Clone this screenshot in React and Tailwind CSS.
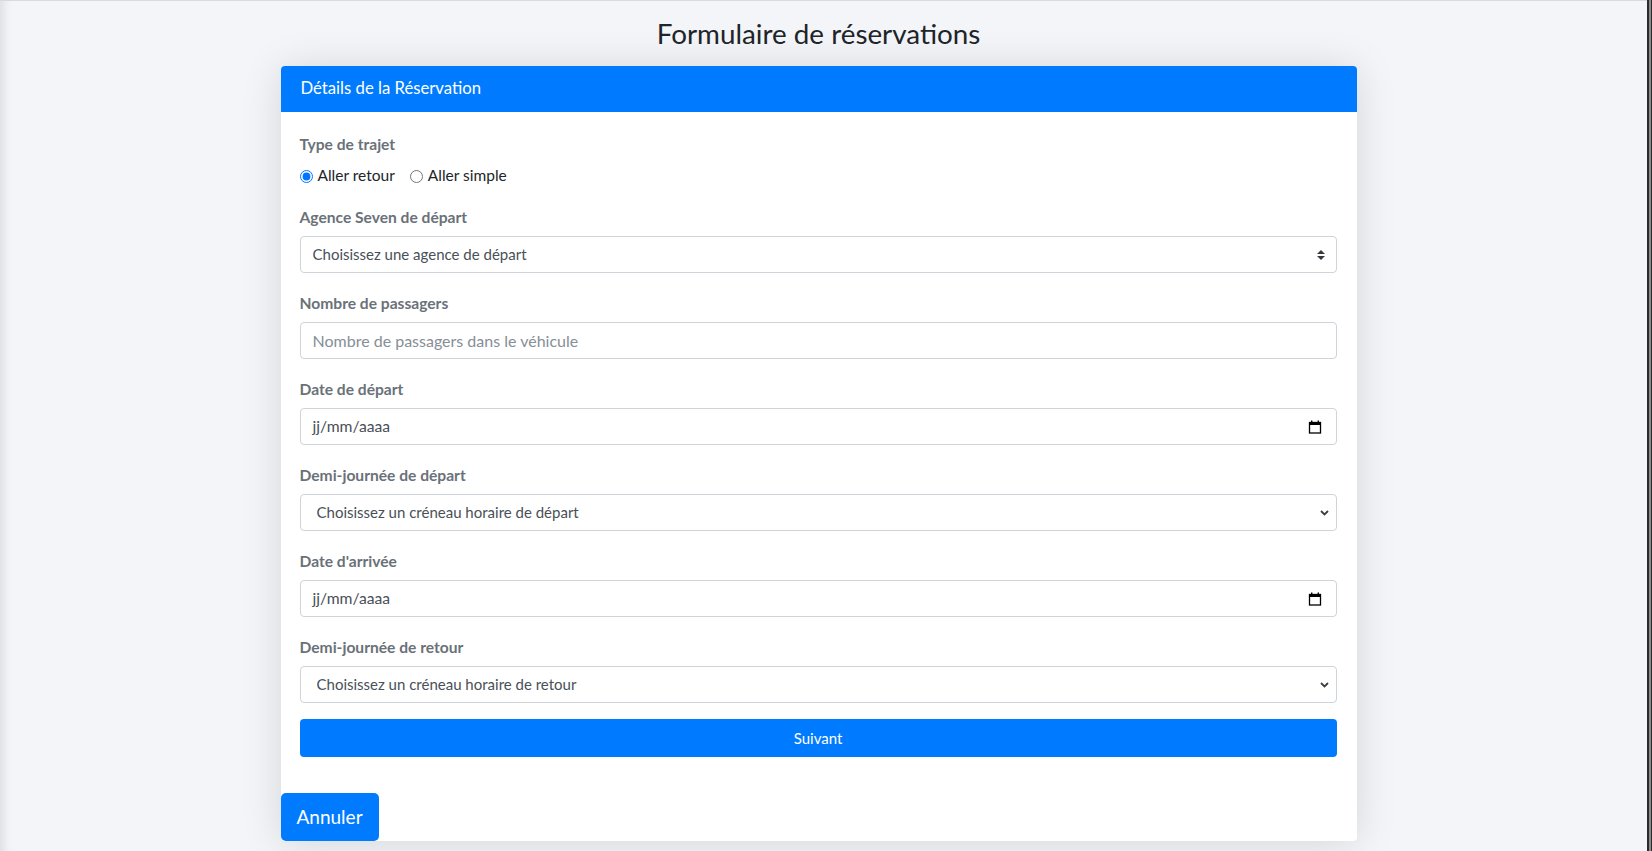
import React, { useState } from "react";

const FONT = { fontFamily: '"Lato", "Liberation Sans", sans-serif' };

function Field({ label, children }) {
  return (
    <div className="mb-[19px]">
      <label className="block h-[22px] leading-[22px] mb-[8px] text-[15.6px] font-bold text-[#6a7178]">
        {label}
      </label>
      {children}
    </div>
  );
}

function UpDownIcon() {
  return (
    <svg width="8" height="10" viewBox="0 0 4 5" className="absolute right-[12px] top-1/2 -translate-y-1/2 pointer-events-none">
      <path fill="#343a40" d="M2 0L0 2h4zm0 5L0 3h4z" />
    </svg>
  );
}

function ChevronIcon() {
  return (
    <svg width="9" height="6" viewBox="0 0 9 6" className="absolute right-[4px] top-1/2 -translate-y-1/2 pointer-events-none">
      <path d="M1 1l3.5 3.5L8 1" fill="none" stroke="#3c4043" strokeWidth="1.8" />
    </svg>
  );
}

function CalendarIcon() {
  return (
    <svg width="14" height="14" viewBox="0 0 14 14">
      <rect x="1.5" y="2.5" width="11" height="10.5" fill="none" stroke="#000" strokeWidth="1.3" />
      <rect x="1" y="2" width="12" height="3" fill="#000" />
      <rect x="3" y="0.5" width="1.4" height="2" fill="#000" />
      <rect x="9.6" y="0.5" width="1.4" height="2" fill="#000" />
    </svg>
  );
}

function CustomSelect({ placeholder }) {
  return (
    <div className="relative">
      <select className="w-full h-[37px] appearance-none rounded-[4px] border border-[#ced4da] bg-white pl-[12px] pr-[28px] text-[15px] text-[#495057] outline-none">
        <option>{placeholder}</option>
      </select>
      <UpDownIcon />
    </div>
  );
}

function NativeSelect({ placeholder }) {
  return (
    <div className="relative">
      <select className="w-full h-[37px] appearance-none rounded-[4px] border border-[#ced4da] bg-white pl-[16px] pr-[24px] text-[15px] text-[#495057] outline-none">
        <option>{placeholder}</option>
      </select>
      <div className="absolute right-[4px] top-0 h-full w-[12px]">
        <ChevronIcon />
      </div>
    </div>
  );
}

function DateInput() {
  return (
    <div className="h-[37px] rounded-[4px] border border-[#ced4da] bg-white pl-[12px] pr-[14px] flex items-center justify-between text-[15.7px] text-[#495057]">
      <span>jj/mm/aaaa</span>
      <CalendarIcon />
    </div>
  );
}

export default function App() {
  const [trip, setTrip] = useState("retour");

  return (
    <div className="flex h-[851px] w-full overflow-hidden" style={FONT}>
      <main className="flex-1 bg-[#f4f5f9] border-t border-[#d9dade] shadow-[inset_14px_0_12px_-12px_rgba(0,0,0,0.12)] flex flex-col items-center pr-[10px]">
        <h3 className="pt-[16px] h-[50px] mb-[15px] text-[27.8px] leading-[34px] text-[#212529]">
          Formulaire de réservations
        </h3>

        <div className="w-[1076px] bg-white rounded-[4px] shadow-[0_2px_40px_rgba(0,0,0,0.13)]">
          <div className="h-[46px] bg-[#007bff] rounded-t-[4px] px-[20px] flex items-center text-[16.7px] text-white">
            Détails de la Réservation
          </div>

          <div className="pl-[19px] pr-[20px] pt-[21px]">
            <div className="mb-[19px]">
              <label className="block h-[22px] leading-[22px] mb-[10px] text-[15.6px] font-bold text-[#6a7178]">
                Type de trajet
              </label>
              <div className="flex items-center h-[22px] text-[15.5px] text-[#212529]">
                <label className="flex items-center mr-[15px]">
                  <input
                    type="radio"
                    name="trip"
                    checked={trip === "retour"}
                    onChange={() => setTrip("retour")}
                    className="m-0 mr-[5px] w-[13px] h-[13px]"
                  />
                  Aller retour
                </label>
                <label className="flex items-center">
                  <input
                    type="radio"
                    name="trip"
                    checked={trip === "simple"}
                    onChange={() => setTrip("simple")}
                    className="m-0 mr-[5px] w-[13px] h-[13px]"
                  />
                  Aller simple
                </label>
              </div>
            </div>

            <Field label="Agence Seven de départ">
              <CustomSelect placeholder="Choisissez une agence de départ" />
            </Field>

            <Field label="Nombre de passagers">
              <input
                type="text"
                placeholder="Nombre de passagers dans le véhicule"
                className="w-full h-[37px] rounded-[4px] border border-[#ced4da] bg-white px-[12px] text-[16px] text-[#495057] placeholder:text-[#868e96] outline-none"
              />
            </Field>

            <Field label="Date de départ">
              <DateInput />
            </Field>

            <Field label="Demi-journée de départ">
              <NativeSelect placeholder="Choisissez un créneau horaire de départ" />
            </Field>

            <Field label="Date d'arrivée">
              <DateInput />
            </Field>

            <div className="mb-[16px]">
              <label className="block h-[22px] leading-[22px] mb-[8px] text-[15.6px] font-bold text-[#6a7178]">
                Demi-journée de retour
              </label>
              <NativeSelect placeholder="Choisissez un créneau horaire de retour" />
            </div>

            <button className="w-full h-[38px] rounded-[4px] bg-[#007bff] text-white text-[15px]">
              Suivant
            </button>
          </div>

          <div className="pt-[36px]">
            <button className="h-[48px] px-[16px] rounded-[5px] bg-[#007bff] text-white text-[19px]">
              Annuler
            </button>
          </div>
        </div>
      </main>
      <div className="w-[5px] bg-[#2b2b2b] flex justify-end">
        <div className="w-[2px] bg-[#8a8a8a] mr-[1px]" />
      </div>
    </div>
  );
}
